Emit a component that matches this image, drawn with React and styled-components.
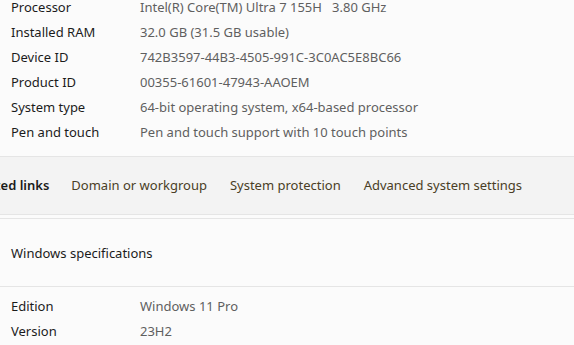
import styled, { createGlobalStyle } from "styled-components";

const Global = createGlobalStyle`
  html, body {
    margin: 0;
    padding: 0;
    background: #fbfbfb;
    overflow: hidden;
  }
  body {
    font-family: "Noto Sans", "Open Sans", sans-serif;
    font-size: 13px;
    color: #1b1b1b;
  }
`;

const Page = styled.div`
  width: 574px;
  height: 345px;
  overflow: hidden;
`;

const SpecList = styled.div`
  display: flex;
  flex-direction: column;
  margin-top: ${(p) => p.$offset || 0}px;
  padding-bottom: ${(p) => p.$bottom || 0}px;
`;

const Row = styled.div`
  display: flex;
  align-items: center;
  height: 25px;
  padding-left: 11px;
  white-space: pre;
`;

const Label = styled.div`
  width: 129px;
  flex-shrink: 0;
  color: #1b1b1b;
`;

const Value = styled.div`
  color: #5f5f5f;
`;

const LinksBar = styled.div`
  display: flex;
  align-items: center;
  height: 55px;
  padding-bottom: 2px;
  background: #f3f3f3;
  border-top: 1px solid #e5e5e5;
  border-bottom: 1px solid #e5e5e5;
  white-space: nowrap;
`;

const LinksTitle = styled.div`
  font-weight: 600;
  color: #1b1b1b;
  margin-left: -32px;
  margin-right: 22px;
`;

const LinkItem = styled.a`
  color: #4a3e26;
  text-decoration: none;
  margin-right: 23px;
`;

const Card = styled.div`
  margin-top: 3px;
  border-top: 1px solid #e5e5e5;
`;

const CardHeader = styled.div`
  height: 67px;
  display: flex;
  align-items: center;
  padding-left: 11px;
  border-bottom: 1px solid #e5e5e5;
`;

const deviceSpecs = [
  ["Processor", "Intel(R) Core(TM) Ultra 7 155H   3.80 GHz"],
  ["Installed RAM", "32.0 GB (31.5 GB usable)"],
  ["Device ID", "742B3597-44B3-4505-991C-3C0AC5E8BC66"],
  ["Product ID", "00355-61601-47943-AAOEM"],
  ["System type", "64-bit operating system, x64-based processor"],
  ["Pen and touch", "Pen and touch support with 10 touch points"],
];

const windowsSpecs = [
  ["Edition", "Windows 11 Pro"],
  ["Version", "23H2"],
];

const links = ["Domain or workgroup", "System protection", "Advanced system settings"];

export default function App() {
  return (
    <Page>
      <Global />
      <SpecList $offset={-6} $bottom={12}>
        {deviceSpecs.map(([k, v]) => (
          <Row key={k}>
            <Label>{k}</Label>
            <Value>{v}</Value>
          </Row>
        ))}
      </SpecList>
      <LinksBar>
        <LinksTitle>Related links</LinksTitle>
        {links.map((l) => (
          <LinkItem key={l} href="#">
            {l}
          </LinkItem>
        ))}
      </LinksBar>
      <Card>
        <CardHeader>Windows specifications</CardHeader>
        <SpecList $offset={6}>
          {windowsSpecs.map(([k, v]) => (
            <Row key={k}>
              <Label>{k}</Label>
              <Value>{v}</Value>
            </Row>
          ))}
        </SpecList>
      </Card>
    </Page>
  );
}
